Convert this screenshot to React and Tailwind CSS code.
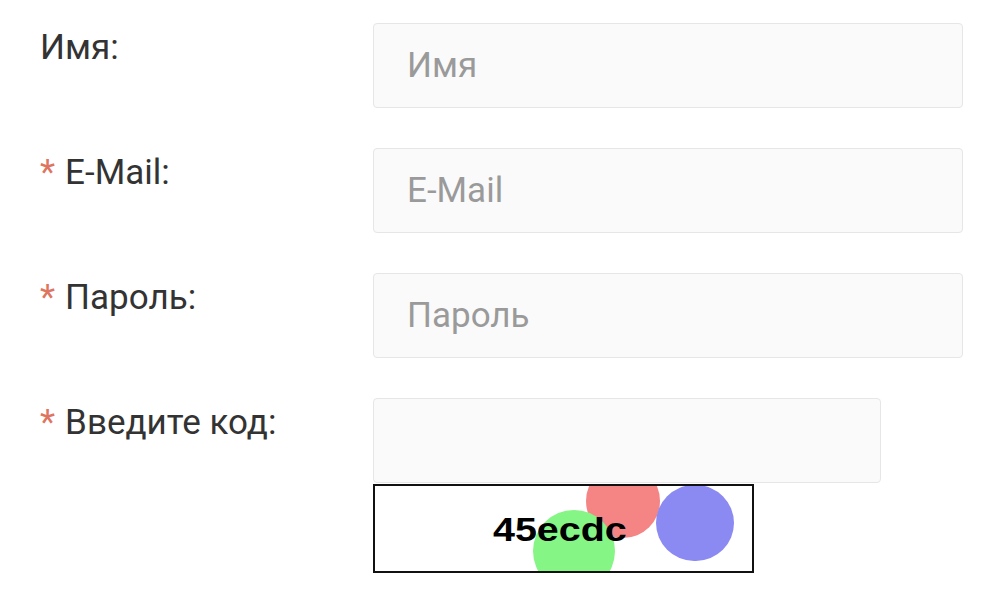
import React from "react";

function Field({ label, required, placeholder, wide = true }) {
  return (
    <div className="flex">
      <div className="w-[333px] shrink-0 pt-[3px] text-[35px] leading-[44px] text-[#333]">
        {required && <span className="mr-[10px] text-[#dd7560]">*</span>}
        {label}
      </div>
      <input
        type="text"
        placeholder={placeholder}
        className={`${wide ? "w-[590px]" : "w-[508px]"} h-[85px] rounded-[4px] border border-[#e6e6e6] bg-[#fafafa] px-[33px] text-[35px] text-[#555] placeholder:text-[#9a9a9a] outline-none`}
      />
    </div>
  );
}

function Captcha() {
  return (
    <div className="relative mt-[1px] h-[89px] w-[381px] overflow-hidden border-2 border-[#111] bg-white">
      <div className="absolute left-[211px] top-[-22px] h-[74px] w-[74px] rounded-full bg-[#f58585]" />
      <div className="absolute left-[158px] top-[24px] h-[82px] w-[82px] rounded-full bg-[#85f585]" />
      <div className="absolute left-[281px] top-[-1px] h-[76px] w-[78px] rounded-full bg-[#8a8af2]" />
      <div className="absolute left-[118px] top-[26px] origin-left scale-x-[1.16] font-['Liberation_Sans',Arial,sans-serif] text-[34px] font-bold leading-none text-black">
        45ecdc
      </div>
    </div>
  );
}

export default function App() {
  return (
    <div className="min-h-screen bg-white pl-[40px] pt-[23px] font-['Roboto',sans-serif]">
      <div className="flex flex-col gap-[40px]">
        <Field label="Имя:" placeholder="Имя" />
        <Field label="E-Mail:" required placeholder="E-Mail" />
        <Field label="Пароль:" required placeholder="Пароль" />
        <div>
          <Field label="Введите код:" required placeholder="" wide={false} />
          <div className="pl-[333px]">
            <Captcha />
          </div>
        </div>
      </div>
    </div>
  );
}
